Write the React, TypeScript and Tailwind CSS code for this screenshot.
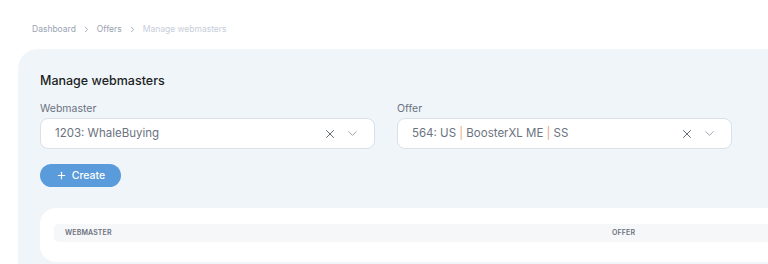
import { X, ChevronDown, ChevronRight, Plus } from "lucide-react";

function SelectBox({ label, children }: { label: string; children: React.ReactNode }) {
    return (
        <div className="flex flex-col">
            <span className="h-[14px] text-[10.5px] leading-[14px] text-[#6b7280]">{label}</span>
            <div className="mt-[2px] flex h-[31px] items-center rounded-[8px] border border-[#d9e0e8] bg-white pl-[14px] pr-[14px]">
                <div className="flex-1 truncate text-[11.5px] text-[#6b7280]">{children}</div>
                <X size={14} strokeWidth={1.5} className="text-[#4b5563]" />
                <ChevronDown size={15} strokeWidth={1.3} className="ml-[8px] text-[#8a93a0]" />
            </div>
        </div>
    );
}

export default function App() {
    return (
        <div className="h-[264px] w-[768px] overflow-hidden bg-white font-['Inter',sans-serif]">
            <nav className="flex h-[49px] items-start pl-[32px] pt-[24px] text-[8.5px] leading-[11px]">
                <span className="text-[#9aa3b4]">Dashboard</span>
                <ChevronRight size={9} strokeWidth={2.4} className="mx-[6px] mt-[1px] text-[#9aa3b4]" />
                <span className="text-[#9aa3b4]">Offers</span>
                <ChevronRight size={9} strokeWidth={2.4} className="mx-[6px] mt-[1px] text-[#9aa3b4]" />
                <span className="text-[#c8ceda]">Manage webmasters</span>
            </nav>

            <section className="ml-[18px] w-[1093px] rounded-[20px] bg-[#f0f5fa] px-[22px] pt-[25px] pb-[40px]">
                <h1 className="text-[12.5px] font-medium leading-[14px] text-[#1c1f24]">Manage webmasters</h1>

                <div className="mt-[14px] grid grid-cols-[335px_335px] gap-[22px]">
                    <SelectBox label="Webmaster">1203: WhaleBuying</SelectBox>
                    <SelectBox label="Offer">
                        564: US <span className="text-[#e9a46f]">|</span> BoosterXL ME{" "}
                        <span className="text-[#e9a46f]">|</span> SS
                    </SelectBox>
                </div>

                <button className="mt-[15px] flex h-[23px] w-[81px] items-center justify-center gap-[5px] rounded-full bg-[#5a9bdb] text-[10.5px] font-medium text-white">
                    <Plus size={11} strokeWidth={2.6} />
                    Create
                </button>

                <div className="mt-[21px] rounded-[16px] bg-white px-[14px] pt-[16px] pb-[20px]">
                    <div className="flex h-[18px] items-center rounded-[5px] bg-[#f6f7f8] text-[7px] font-semibold uppercase tracking-[0.02em] text-[#6b7280]">
                        <span className="w-[558px] pl-[11px]">Webmaster</span>
                        <span>Offer</span>
                    </div>
                </div>
            </section>
        </div>
    );
}
